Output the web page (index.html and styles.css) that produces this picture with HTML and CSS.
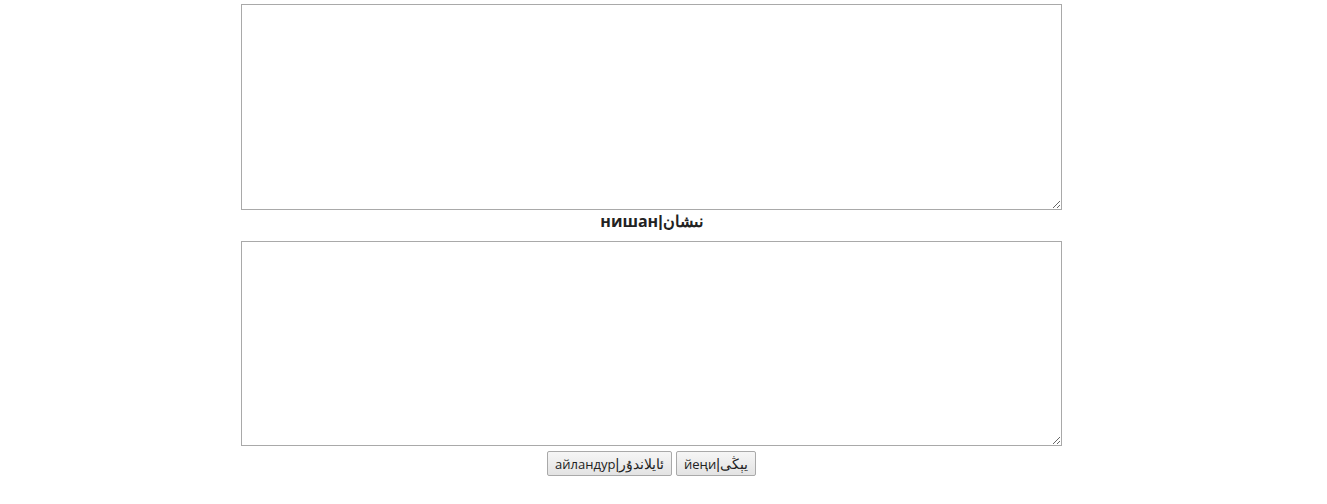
FILE: index.html
```html
<!DOCTYPE html>
<html>
<head>
<meta charset="utf-8">
<link rel="stylesheet" href="styles.css">
</head>
<body>
<div class="page">
  <textarea class="box"></textarea>
  <div class="label"><span class="cy">нишан</span><span class="ar">|نىشان</span></div>
  <textarea class="box box-low"></textarea>
  <div class="actions">
    <button class="btn"><span class="cy">айландур</span><span class="ar">|ئايلاندۇر</span></button>
    <button class="btn"><span class="cy">йеңи</span><span class="ar">|يېڭى</span></button>
  </div>
</div>
</body>
</html>
```
FILE: styles.css
```css
html, body {
  margin: 0;
  padding: 0;
  background: #fff;
}
.page {
  display: flex;
  flex-direction: column;
  align-items: center;
  padding-top: 4px;
  padding-right: 24px;
  font-family: "Open Sans", "Noto Sans", sans-serif;
  color: #222;
}
.cy {
  font-family: "Open Sans", "Noto Sans", sans-serif;
}
.ar {
  font-family: "Liberation Sans", sans-serif;
}
.box {
  box-sizing: border-box;
  width: 821px;
  height: 206px;
  border: 1px solid #a9a9a9;
  margin: 0;
  padding: 2px;
  display: block;
  resize: both;
  background: #fff;
}
.box-low {
  height: 205px;
}
.label {
  height: 31px;
  line-height: 22px;
  font-weight: bold;
  font-size: 16px;
  text-align: center;
}
.actions {
  display: flex;
  gap: 4px;
  margin-top: 5px;
}
.btn {
  font-size: 13px;
  height: 25px;
  padding: 0 7px;
  border: 1px solid #a9a9a9;
  border-radius: 2px;
  background: linear-gradient(#f6f6f6, #e3e3e3);
  color: #222;
}
.btn .ar {
  font-size: 14px;
}
```
